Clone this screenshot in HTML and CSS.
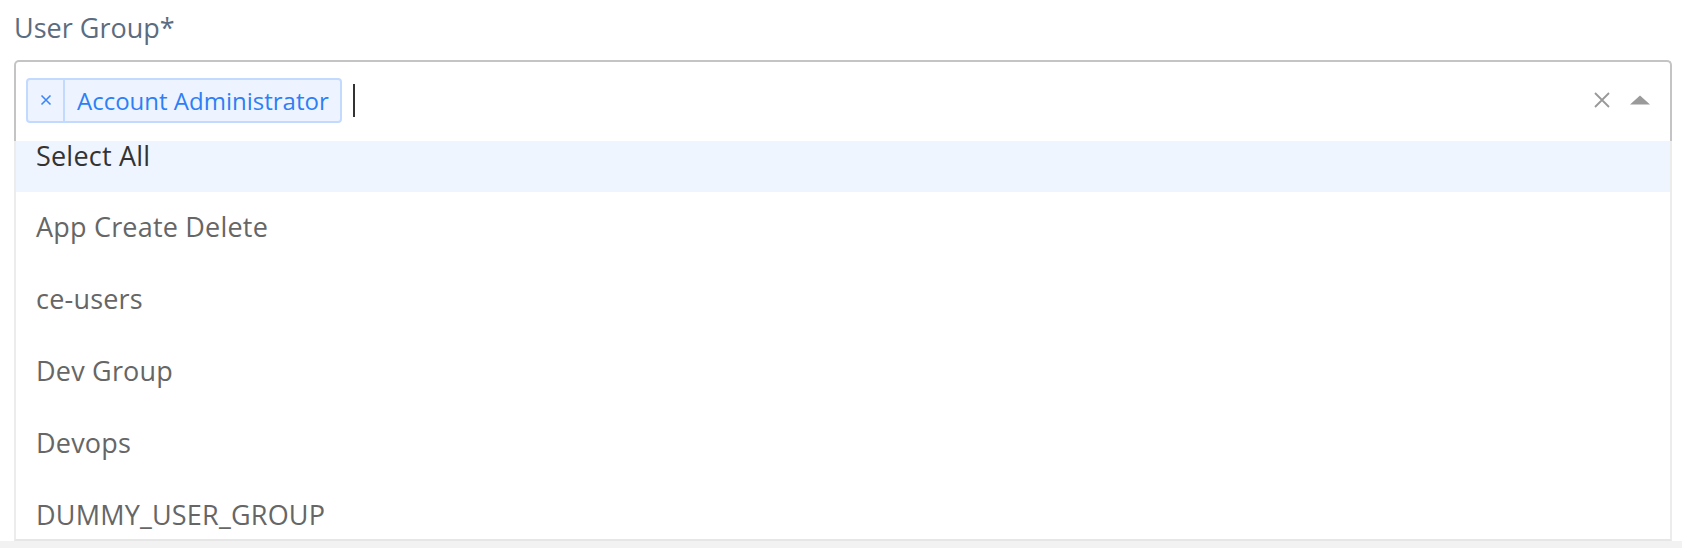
FILE: index.html
```html
<!DOCTYPE html>
<html lang="en">
<head>
<meta charset="utf-8">
<title>User Group</title>
<link rel="stylesheet" href="styles.css">
</head>
<body>
<div class="panel">
  <label class="field-label">User Group*</label>
  <div class="control">
    <div class="value-area">
      <div class="tag">
        <span class="tag-remove">
          <svg width="12" height="12" viewBox="0 0 12 12"><path d="M1.5 1.5 L10.5 10.5 M10.5 1.5 L1.5 10.5" stroke="#3d86f4" stroke-width="1.6" fill="none"/></svg>
        </span>
        <span class="tag-label">Account Administrator</span>
      </div>
      <span class="caret"></span>
    </div>
    <div class="indicators">
      <svg class="clear" width="16" height="16" viewBox="0 0 16 16"><path d="M1 1 L15 15 M15 1 L1 15" stroke="#999" stroke-width="1.8" fill="none"/></svg>
      <svg class="arrow" width="20" height="10" viewBox="0 0 20 10"><path d="M0 9.5 L10 0.5 L20 9.5 Z" fill="#9a9a9a"/></svg>
    </div>
  </div>
  <div class="menu">
    <ul class="menu-list">
      <li class="option focused first">Select All</li>
      <li class="option">App Create Delete</li>
      <li class="option">ce-users</li>
      <li class="option">Dev Group</li>
      <li class="option">Devops</li>
      <li class="option last">DUMMY_USER_GROUP</li>
    </ul>
  </div>
</div>
</body>
</html>
```
FILE: styles.css
```css
html, body {
  margin: 0;
  padding: 0;
}
body {
  background: #f2f2f2;
  font-family: "Open Sans", "Noto Sans", sans-serif;
  width: 1682px;
  height: 548px;
  overflow: hidden;
}
.panel {
  background: #ffffff;
  height: 541px;
  padding: 10px 10px 0 14px;
  box-sizing: border-box;
}
.field-label {
  display: block;
  font-size: 27px;
  line-height: 36px;
  color: #5c6c80;
  margin-bottom: 14px;
}
.control {
  box-sizing: border-box;
  height: 81px;
  border: 2px solid #c4c4c4;
  border-bottom: 0;
  border-radius: 5px 5px 0 0;
  display: flex;
  align-items: center;
  justify-content: space-between;
  padding: 0 0 3px 10px;
}
.value-area {
  display: flex;
  align-items: center;
}
.tag {
  display: flex;
  align-items: stretch;
  height: 45px;
  box-sizing: border-box;
  border: 2px solid #c3daff;
  border-radius: 4px;
  background: #edf4ff;
}
.tag-remove {
  width: 35px;
  display: flex;
  align-items: center;
  justify-content: center;
  border-right: 2px solid #c3daff;
}
.tag-label {
  display: flex;
  align-items: center;
  padding: 0 11px 0 12px;
  font-size: 24px;
  color: #2e7ff6;
}
.caret {
  display: block;
  width: 2px;
  height: 33px;
  background: #333;
  margin-left: 11px;
}
.indicators {
  display: flex;
  align-items: center;
  gap: 20px;
  padding-right: 20px;
}
.menu {
  height: 400px;
  box-sizing: border-box;
  overflow: hidden;
  border-left: 2px solid #ececec;
  border-right: 2px solid #ececec;
  border-bottom: 2px solid #e6e6e6;
  background: #fff;
}
.menu-list {
  list-style: none;
  margin: 0;
  padding: 0;
}
.option {
  box-sizing: border-box;
  height: 72px;
  display: flex;
  align-items: center;
  padding: 0 0 4px 20px;
  font-size: 27px;
  line-height: 1;
  letter-spacing: 0.2px;
  color: #666666;
}
.option.first {
  height: 51px;
  padding-bottom: 23px;
}
.option.last {
  height: 59px;
  padding: 9px 0 0 20px;
}
.option.focused {
  background: #eef5ff;
  color: #333333;
}
```
